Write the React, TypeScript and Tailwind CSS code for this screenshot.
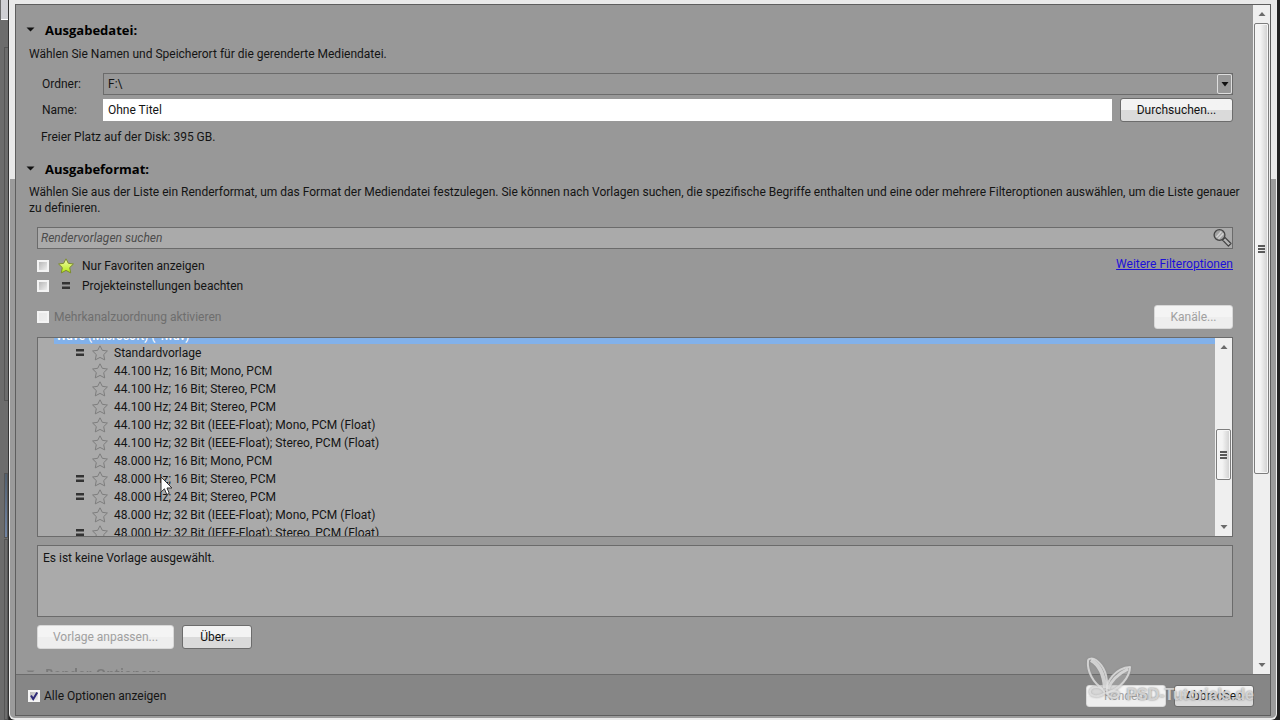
import { useState, type ButtonHTMLAttributes, type InputHTMLAttributes } from "react"
import clsx from "clsx"

const STAR_PATH = "M8 .8 10.3 5.3 15.4 6 11.7 9.6 12.7 14.9 8 12.4 3.3 14.9 4.3 9.6 .6 6 5.7 5.3Z"

const TEMPLATES = [
  { name: "Standardvorlage", matches: true },
  { name: "44.100 Hz; 16 Bit; Mono, PCM", matches: false },
  { name: "44.100 Hz; 16 Bit; Stereo, PCM", matches: false },
  { name: "44.100 Hz; 24 Bit; Stereo, PCM", matches: false },
  { name: "44.100 Hz; 32 Bit (IEEE-Float); Mono, PCM (Float)", matches: false },
  { name: "44.100 Hz; 32 Bit (IEEE-Float); Stereo, PCM (Float)", matches: false },
  { name: "48.000 Hz; 16 Bit; Mono, PCM", matches: false },
  { name: "48.000 Hz; 16 Bit; Stereo, PCM", matches: true },
  { name: "48.000 Hz; 24 Bit; Stereo, PCM", matches: true },
  { name: "48.000 Hz; 32 Bit (IEEE-Float); Mono, PCM (Float)", matches: false },
  { name: "48.000 Hz; 32 Bit (IEEE-Float); Stereo, PCM (Float)", matches: true },
]

function Star({ filled = false }: { filled?: boolean }) {
  return (
    <svg viewBox="0 0 16 16" className="size-4 shrink-0" aria-hidden="true">
      <path
        d={STAR_PATH}
        fill={filled ? "url(#favorite)" : "none"}
        stroke={filled ? "#7c8a2e" : "#7d7d7d"}
        strokeWidth="1"
        strokeLinejoin="round"
      />
      {filled && (
        <defs>
          <linearGradient id="favorite" x1="0" y1="0" x2="0" y2="1">
            <stop offset="0" stopColor="#f4fbb0" />
            <stop offset="1" stopColor="#b4ea12" />
          </linearGradient>
        </defs>
      )}
    </svg>
  )
}

function EqualSign() {
  return (
    <svg viewBox="0 0 10 8" className="h-2 w-2.5 shrink-0" aria-hidden="true">
      <path d="M1 0h8v2.4H1zM1 4.6h8V7H1z" fill="#333" />
    </svg>
  )
}

function SearchIcon() {
  return (
    <svg viewBox="0 0 20 20" className="size-5 shrink-0" aria-hidden="true">
      <path d="M10.5 12 13 9.5 19 15.5 16.4 18.2Z" fill="#b4b4b4" stroke="#444" strokeWidth="1.2" strokeLinejoin="round" />
      <circle cx="7.5" cy="7" r="5.4" fill="#a2a2a2" stroke="#444" strokeWidth="1.3" />
      <path d="M4.4 9.2 9.4 3.6M6.4 10.8 11.4 5.4" stroke="#d2d2d2" strokeWidth="1.5" />
    </svg>
  )
}

function WinButton({ className, ...props }: ButtonHTMLAttributes<HTMLButtonElement>) {
  return (
    <button
      type="button"
      className={clsx(
        "shrink-0 rounded-[3px] border bg-linear-to-b from-50% to-50%",
        "border-[#6c6c6c] from-[#f3f3f3] to-[#dadada] text-[#111]",
        "disabled:border-[#d8d8d8] disabled:from-[#f4f4f4] disabled:to-[#eeeeee] disabled:text-[#a0a0a0]",
        className
      )}
      {...props}
    />
  )
}

function Checkbox(props: InputHTMLAttributes<HTMLInputElement>) {
  return (
    <span className="grid size-3 shrink-0 place-items-center">
      <input
        type="checkbox"
        className="peer col-start-1 row-start-1 size-3 appearance-none border-2 border-[#f4f4f4] bg-linear-to-br from-[#b8b8b8] to-[#eeeeee] disabled:from-[#e8e8e8]"
        {...props}
      />
      <svg viewBox="0 0 12 12" className="pointer-events-none col-start-1 row-start-1 hidden size-3 peer-checked:block" aria-hidden="true">
        <path d="M3 5.5 5.2 9 9.2 2.5" fill="none" stroke="#2d2a78" strokeWidth="2" />
      </svg>
    </span>
  )
}

function Heading({ children }: { children: string }) {
  return (
    <h2 className="flex h-5 items-center gap-2.5 pl-2.5 font-['Open_Sans',sans-serif] text-[13px] font-bold text-black">
      <svg viewBox="0 0 9 8" className="h-2 w-[9px]" aria-hidden="true">
        <path d="M.5 1.5h8l-4 4z" fill="#111" />
      </svg>
      {children}
    </h2>
  )
}

function Arrow({ up = false }: { up?: boolean }) {
  return (
    <svg viewBox="0 0 8 4" className={clsx("h-1 w-2 shrink-0", up && "rotate-180")} aria-hidden="true">
      <path d="M.5 0h7L4 4z" fill="#6b6b6b" />
    </svg>
  )
}

function Scrollbar({ offset, thumb }: { offset: string; thumb: string }) {
  return (
    <div className="flex w-[17px] shrink-0 flex-col items-center bg-[#efefef] py-[7px]">
      <Arrow up />
      <div className="flex min-h-0 w-[15px] flex-1 flex-col">
        <div className={offset} />
        <div
          className={clsx(
            "flex flex-col items-center justify-center gap-px rounded-xs border border-[#7d7d7d] bg-linear-to-r from-[#f4f4f4] from-40% to-[#cfcfcf] shadow-[inset_0_0_0_1px_#f6f6f6]",
            thumb
          )}
        >
          <span className="h-0.5 w-[7px] bg-[#5a5a5a]" />
          <span className="h-0.5 w-[7px] bg-[#5a5a5a]" />
          <span className="h-0.5 w-[7px] bg-[#5a5a5a]" />
        </div>
      </div>
      <Arrow />
    </div>
  )
}

function Pointer() {
  return (
    <svg viewBox="0 0 13 20" className="pointer-events-none absolute top-[138px] left-[122px] z-10 h-5 w-[13px]" aria-hidden="true">
      <path d="M1 1v15l3.4-3.2L6.8 18.5 9.3 17.4 7 12h5z" fill="#fff" stroke="#333" strokeWidth="1" strokeLinejoin="round" />
    </svg>
  )
}

function Watermark() {
  return (
    <div className="pointer-events-none absolute right-4 bottom-1 flex items-end text-[#e2e2e2]/80">
      <svg viewBox="0 0 46 42" className="-mr-1.5 mb-3 h-[42px] w-[46px] drop-shadow-[0_0_1px_#888]" fill="none" stroke="currentColor" strokeWidth="2" strokeLinejoin="round" aria-hidden="true">
        <path d="M17 32C7 26 1 14 2 4c0-3 5-3 8-1 8 6 12 15 11 29" />
        <path d="M5 3c9 5 13 15 14 28" strokeWidth="4" />
        <path d="M21 36c-2-12 9-25 23-26 0 10-10 22-23 26z" fill="currentColor" fillOpacity=".3" />
        <path d="M22 32c3-8 10-15 20-20" strokeWidth="3" />
        <path d="M19 36c-4-8-13-7-15-2-1 6 9 7 15 2zM21 36c2 6 9 6 12 2 0-5-7-5-12-2z" fill="currentColor" fillOpacity=".4" />
      </svg>
      <span className="font-['Liberation_Sans',sans-serif] text-[16px] leading-8 font-bold [text-shadow:0_0_2px_#777]">
        PSD-Tutorials.de
      </span>
    </div>
  )
}

export default function App() {
  const [fileName, setFileName] = useState("Ohne Titel")
  const [query, setQuery] = useState("")
  const [showAll, setShowAll] = useState(true)

  return (
    <div className="flex h-screen overflow-hidden bg-[#222] pr-[3px] font-[Roboto,sans-serif] text-[12px] leading-4 text-[#141414]">
      {/* application behind the dialog */}
      <div className="flex w-[9px] shrink-0 flex-col border-r border-[#333] bg-[#6c6c6c] pl-px">
        <div className="h-5 border-b border-white bg-[#d0d0d4]" />
        <div className="mt-[27px] ml-[3px] h-[354px] border-y border-l border-[#555]" />
        <div className="mt-[72px] ml-[3px] h-[65px] border border-[#555] bg-linear-to-b from-[#52606f] to-[#7184a3]" />
        <div className="mt-px ml-[3px] flex-1 border border-[#555]" />
      </div>

      <div className="flex min-w-0 flex-1 flex-col rounded-b-md border-x border-b-2 border-[#ececec] bg-linear-to-b from-[#e9e9e9] from-25% to-[#9b9b9b] to-25% px-[5px] pt-1 pb-0.5">
        <div className="relative flex min-h-0 flex-1 flex-col border border-[#5e5e5e] bg-[#989898]">
          <div className="flex min-h-0 flex-1">
            <main className="mb-0.5 min-w-0 flex-1 overflow-hidden pt-[15px]">
              <section>
                <Heading>Ausgabedatei:</Heading>
                <p className="mt-1.5 pl-[13px]">Wählen Sie Namen und Speicherort für die gerenderte Mediendatei.</p>
                <div className="mt-[11px] mr-5 ml-[26px]">
                  <div className="flex items-center">
                    <label htmlFor="folder" className="w-[61px]">Ordner:</label>
                    <div className="grid flex-1 items-center border border-[#6b6b6b]">
                      <select id="folder" className="col-start-1 row-start-1 h-5 appearance-none px-1">
                        <option>F:\</option>
                      </select>
                      <span className="pointer-events-none col-start-1 row-start-1 flex h-5 w-[15px] items-center justify-center justify-self-end rounded-xs border border-[#dedede]">
                        <svg viewBox="0 0 8 5" className="h-[5px] w-2" aria-hidden="true">
                          <path d="M.5 0h7L4 4.5z" fill="#111" />
                        </svg>
                      </span>
                    </div>
                  </div>
                  <div className="mt-[3px] flex items-center">
                    <label htmlFor="name" className="w-[61px]">Name:</label>
                    <input
                      id="name"
                      value={fileName}
                      onChange={(e) => setFileName(e.target.value)}
                      className="h-[22px] min-w-0 flex-1 bg-white px-[5px]"
                    />
                    <WinButton className="ml-2 h-6 w-[113px]">Durchsuchen...</WinButton>
                  </div>
                </div>
                <p className="mt-[7px] pl-[25px]">Freier Platz auf der Disk: 395 GB.</p>
              </section>

              <section className="mt-[14px]">
                <Heading>Ausgabeformat:</Heading>
                <p className="mt-[5px] mr-2.5 pl-[13px]">
                  Wählen Sie aus der Liste ein Renderformat, um das Format der Mediendatei festzulegen. Sie können nach
                  Vorlagen suchen, die spezifische Begriffe enthalten und eine oder mehrere Filteroptionen auswählen, um
                  die Liste genauer zu definieren.
                </p>

                <div className="mt-[11px] mr-5 ml-[21px]">
                  <div className="flex h-[22px] items-center border border-[#6b6b6b] bg-[#aaa]">
                    <input
                      type="search"
                      aria-label="Rendervorlagen suchen"
                      placeholder="Rendervorlagen suchen"
                      value={query}
                      onChange={(e) => setQuery(e.target.value)}
                      className="h-5 min-w-0 flex-1 px-[3px] placeholder:text-[#4c4c4c] placeholder:italic"
                    />
                    <SearchIcon />
                  </div>

                  <div className="mt-[7px] flex items-start justify-between">
                    <div>
                      <label className="flex h-5 items-center">
                        <Checkbox />
                        <span className="mr-2 ml-2 flex w-[17px] justify-center"><Star filled /></span>
                        Nur Favoriten anzeigen
                      </label>
                      <label className="flex h-5 items-center">
                        <Checkbox />
                        <span className="mr-2 ml-2 flex w-[17px] justify-center"><EqualSign /></span>
                        Projekteinstellungen beachten
                      </label>
                    </div>
                    <a href="#filter" className="text-[#1c10d8] underline">Weitere Filteroptionen</a>
                  </div>

                  <div className="mt-[9px] flex items-center justify-between">
                    <label className="flex items-center gap-[5px] text-[#6e6e6e]">
                      <Checkbox disabled />
                      Mehrkanalzuordnung aktivieren
                    </label>
                    <WinButton disabled className="h-6 w-[79px]">Kanäle...</WinButton>
                  </div>

                  <div className="relative mt-2 flex h-[200px] border border-[#6b6b6b] bg-[#aaa]">
                    <div className="min-w-0 flex-1 overflow-hidden">
                      <div className="-mt-3 ml-4 h-[18px] bg-[#82b1ea] pl-0.5 leading-5 font-medium text-white">
                        Wave (Microsoft) (*.wav)
                      </div>
                      <ul>
                        {TEMPLATES.map((template) => (
                          <li key={template.name} className="flex h-[18px] items-center pl-[37px]">
                            <span className="w-[17px]">{template.matches && <EqualSign />}</span>
                            <Star />
                            <span className="ml-1.5">{template.name}</span>
                          </li>
                        ))}
                      </ul>
                    </div>
                    <Scrollbar offset="h-[80px] shrink-0" thumb="h-[51px] shrink-0" />
                    <Pointer />
                  </div>

                  <div className="mt-2 h-[72px] border border-[#6b6b6b] bg-[#aaa] px-[5px] py-1">
                    Es ist keine Vorlage ausgewählt.
                  </div>

                  <div className="mt-2 flex gap-2">
                    <WinButton disabled className="h-6 w-[137px]">Vorlage anpassen...</WinButton>
                    <WinButton className="h-6 w-[70px]">Über...</WinButton>
                  </div>
                </div>
              </section>

              <section className="mt-[14px] opacity-20">
                <Heading>Render-Optionen:</Heading>
              </section>
            </main>
            <Scrollbar offset="h-[7px] shrink-0" thumb="h-[451px] shrink-0" />
          </div>

          <footer className="flex h-[41px] shrink-0 items-center gap-2 border-t border-[#6b6b6b] bg-[#868686] pt-0.5 pr-4 pl-3">
            <label className="mr-auto flex items-center gap-1">
              <Checkbox checked={showAll} onChange={(e) => setShowAll(e.target.checked)} />
              Alle Optionen anzeigen
            </label>
            <WinButton disabled className="h-[22px] w-[80px]">Rendern</WinButton>
            <WinButton className="h-[22px] w-[80px]">Abbrechen</WinButton>
          </footer>
          <Watermark />
        </div>
      </div>
    </div>
  )
}
